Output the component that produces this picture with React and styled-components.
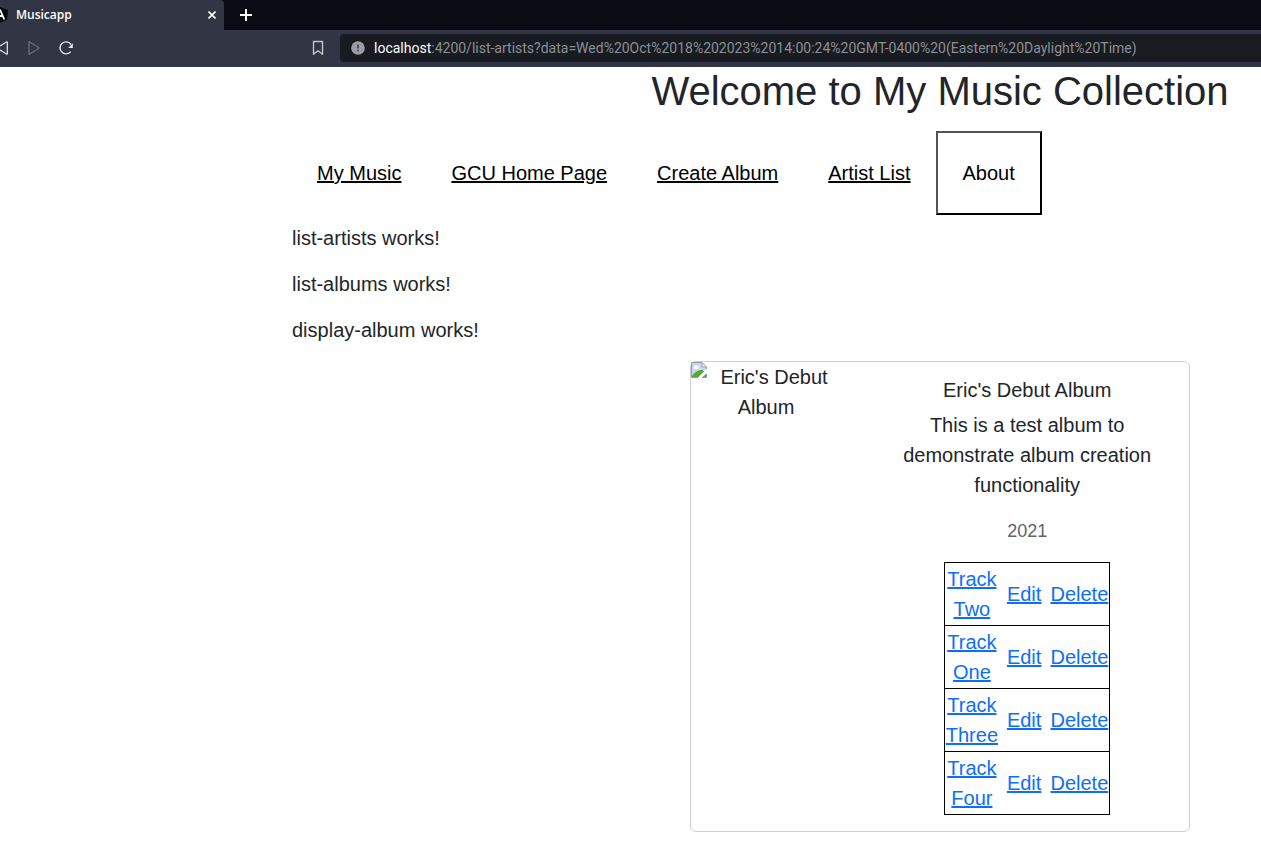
import React from "react";
import styled, { createGlobalStyle } from "styled-components";

const GlobalStyle = createGlobalStyle`
  *, *::before, *::after { box-sizing: border-box; }
  body {
    margin: 0;
    background: #fff;
    color: #212529;
    font-family: "Liberation Sans", Arial, sans-serif;
    font-size: 20px;
    line-height: 30px;
    overflow-x: hidden;
  }
`;

const Browser = styled.header`
  font-family: "Open Sans", "Segoe UI", sans-serif;
  background: #323543;
`;

const TabStrip = styled.div`
  display: flex;
  height: 30px;
  background: #0b0b15;
`;

const Tab = styled.div`
  display: flex;
  align-items: center;
  width: 224px;
  padding-right: 6px;
  background: #323543;
  border-radius: 0 4px 0 0;
  color: #fff;
`;

const TabTitle = styled.span`
  flex: 1;
  padding-left: 8px;
  font-size: 12px;
  font-weight: 600;
  line-height: 16px;
`;

const IconButton = styled.button`
  display: flex;
  align-items: center;
  justify-content: center;
  flex: none;
  width: ${(p) => p.$width || 32}px;
  height: ${(p) => p.$height || 32}px;
  padding: 0;
  border: 0;
  background: none;
  color: ${(p) => p.$color || "#fff"};
`;

const Toolbar = styled.div`
  display: flex;
  align-items: center;
  height: 37px;
  padding-bottom: 1px;
`;

const NavButtons = styled.div`
  display: flex;
  flex: none;
  width: 316px;
  margin-left: -14px;
`;

const AddressBar = styled.div`
  display: flex;
  align-items: center;
  flex: 1;
  height: 28px;
  margin-left: 6px;
  padding-left: 11px;
  border-radius: 4px 0 0 4px;
  background: #181b22;
  font-family: Roboto, "Segoe UI", sans-serif;
  font-size: 14px;
  line-height: 20px;
`;

const Host = styled.label`
  margin-left: 9px;
  color: #fff;
`;

const Path = styled.input`
  flex: 1;
  min-width: 0;
  padding: 0;
  border: 0;
  outline: 0;
  background: none;
  color: #8c8f95;
  font: inherit;
`;

const Page = styled.main`
  padding-left: 292px;
`;

const Centered = styled.div`
  display: flex;
  justify-content: center;
  padding-left: 327px;
`;

const Title = styled.h1`
  margin: 0 0 16px;
  font-size: 40px;
  font-weight: 400;
  line-height: 48px;
  white-space: nowrap;
`;

const Nav = styled.nav`
  display: flex;
  align-items: center;
  margin-bottom: 8px;
`;

const NavLink = styled.a`
  padding: 25px;
  color: #000;
  white-space: nowrap;
`;

const AboutButton = styled.button`
  padding: 25px;
  border: 2px outset #000;
  background: #fff;
  color: #000;
  font: inherit;
`;

const Note = styled.p`
  margin: 0 0 16px;
`;

const Card = styled.article`
  display: flex;
  width: 500px;
  border: 1px solid #d0d0d0;
  border-radius: 6px;
  text-align: center;
`;

const Cover = styled.div`
  flex: 0 0 35%;
`;

const CoverAlt = styled.div`
  width: 150px;

  svg {
    float: left;
    display: block;
  }
`;

const CardBody = styled.div`
  flex: 1;
  padding: 16px;
`;

const CardTitle = styled.h5`
  margin: 0 0 8px;
  font-size: 20px;
  font-weight: 400;
  line-height: 24px;
`;

const Year = styled(Note)`
  color: #5f6367;
  font-size: 18px;
`;

const Tracks = styled.table`
  width: 166px;
  margin: 0 auto;
  border: 1px solid #000;
  border-collapse: collapse;
  table-layout: fixed;
`;

const TrackRow = styled.tr`
  border: 1px solid #000;
`;

const Cell = styled.td`
  width: ${(p) => p.$width}px;
  padding: 1px 0;
`;

const TrackLink = styled.a`
  color: #0d6efd;
`;

const tracks = ["Two", "One", "Three", "Four"];

const AngularLogo = () => (
  <svg width="8" height="16" viewBox="0 0 8 16">
    <path d="M0 0 8 3 7 12.500 0 16Z" fill="#05070c" />
    <path d="M0 2.500 4.300 12.500M0 9H2.500" fill="none" stroke="#fff" strokeWidth="1.8" />
  </svg>
);

const Triangle = ({ back }) => (
  <svg width="12" height="14" viewBox="0 0 12 14" fill="none" stroke="currentColor" strokeWidth="1.3" strokeLinejoin="round">
    <path d={back ? "M11.300 1.300Q11.300.6 10.500 1L1.500 6.500Q1 7 1.500 7.500L10.500 13Q11.300 13.400 11.300 12.700Z" : "M1 1.300Q1 .6 1.800 1L10.700 6.500Q11.200 7 10.700 7.500L1.800 13Q1 13.400 1 12.700Z"} />
  </svg>
);

const Reload = () => (
  <svg width="16" height="16" viewBox="0 0 16 16" fill="none" stroke="currentColor" strokeWidth="1.4">
    <path d="M12.700 11.600A6 6 0 1 1 13 4.500" />
    <path d="M14.800 3.300V8H10.200Z" fill="currentColor" stroke="none" />
  </svg>
);

const Bookmark = () => (
  <svg width="12" height="16" viewBox="0 0 12 16" fill="none" stroke="currentColor" strokeWidth="1.4" strokeLinejoin="round">
    <path d="M1.500 1.500h9v12.700L6 10.700l-4.500 3.500Z" />
  </svg>
);

const Info = () => (
  <svg width="14" height="14" viewBox="0 0 14 14">
    <circle cx="7" cy="7" r="6.800" fill="#9b9ea5" />
    <path d="M6.200 3.500h1.600v4H6.200ZM6.200 8.800h1.600v1.600H6.200Z" fill="#3b3e46" />
  </svg>
);

const BrokenImage = () => (
  <svg width="16" height="16" viewBox="0 0 16 16">
    <path d="M.5 .5H11L15.500 5V15.500H.5Z" fill="#c3d9f8" />
    <path d="M3 7a1.500 1.500 0 0 1 .5-2.800 2 2 0 0 1 3.500 0A1.500 1.500 0 0 1 7.500 7Z" fill="#fff" />
    <path d="M1 15V14C4 10 8 7 12 8.500L15 11V15Z" fill="#56a832" />
    <path d="M16 6.500 6.500 16H10.500L16 11Z" fill="#fff" />
    <path d="M11 .5V5H15.500Z" fill="#fff" stroke="#9a9a9a" />
    <path d="M7 15.500H.5V.5H11M15.500 5V7M15.500 12V15.500H11" fill="none" stroke="#9a9a9a" />
  </svg>
);

export default function App() {
  return (
    <>
      <GlobalStyle />
      <Browser>
        <TabStrip>
          <Tab>
            <AngularLogo />
            <TabTitle>Musicapp</TabTitle>
            <IconButton $width={12} $height={16} aria-label="Close tab">
              <svg width="8" height="8" viewBox="0 0 8 8" stroke="currentColor" strokeWidth="1.6">
                <path d="M.5 .5l7 7M7.500 .5l-7 7" />
              </svg>
            </IconButton>
          </Tab>
          <IconButton $width={44} $height={30} aria-label="New tab">
            <svg width="12" height="12" viewBox="0 0 12 12" stroke="currentColor" strokeWidth="2">
              <path d="M6 0v12M0 6h12" />
            </svg>
          </IconButton>
        </TabStrip>
        <Toolbar>
          <NavButtons>
            <IconButton aria-label="Back" $color="#dcdde0"><Triangle back /></IconButton>
            <IconButton aria-label="Forward" $color="#6b6e7a"><Triangle /></IconButton>
            <IconButton aria-label="Reload" $color="#e8e8ea"><Reload /></IconButton>
          </NavButtons>
          <IconButton aria-label="Bookmark" $color="#c4c5c9"><Bookmark /></IconButton>
          <AddressBar>
            <Info />
            <Host htmlFor="address">localhost</Host>
            <Path
              id="address"
              readOnly
              value=":4200/list-artists?data=Wed%20Oct%2018%202023%2014:00:24%20GMT-0400%20(Eastern%20Daylight%20Time)"
            />
          </AddressBar>
        </Toolbar>
      </Browser>
      <Page>
        <Centered>
          <Title>Welcome to My Music Collection</Title>
        </Centered>
        <Nav>
          <NavLink href="#music">My Music</NavLink>
          <NavLink href="#gcu">GCU Home Page</NavLink>
          <NavLink href="#create">Create Album</NavLink>
          <NavLink href="#artists">Artist List</NavLink>
          <AboutButton>About</AboutButton>
        </Nav>
        <Note>list-artists works!</Note>
        <Note>list-albums works!</Note>
        <Note>display-album works!</Note>
        <Centered>
          <Card>
            <Cover>
              <CoverAlt>
                <BrokenImage />
                Eric's Debut Album
              </CoverAlt>
            </Cover>
            <CardBody>
              <CardTitle>Eric's Debut Album</CardTitle>
              <Note>This is a test album to demonstrate album creation functionality</Note>
              <Year>2021</Year>
              <Tracks>
                <tbody>
                  {tracks.map((name) => (
                    <TrackRow key={name}>
                      <Cell $width={54}><TrackLink href="#track">Track {name}</TrackLink></Cell>
                      <Cell $width={51}><TrackLink href="#edit">Edit</TrackLink></Cell>
                      <Cell $width={60}><TrackLink href="#delete">Delete</TrackLink></Cell>
                    </TrackRow>
                  ))}
                </tbody>
              </Tracks>
            </CardBody>
          </Card>
        </Centered>
      </Page>
    </>
  );
}
